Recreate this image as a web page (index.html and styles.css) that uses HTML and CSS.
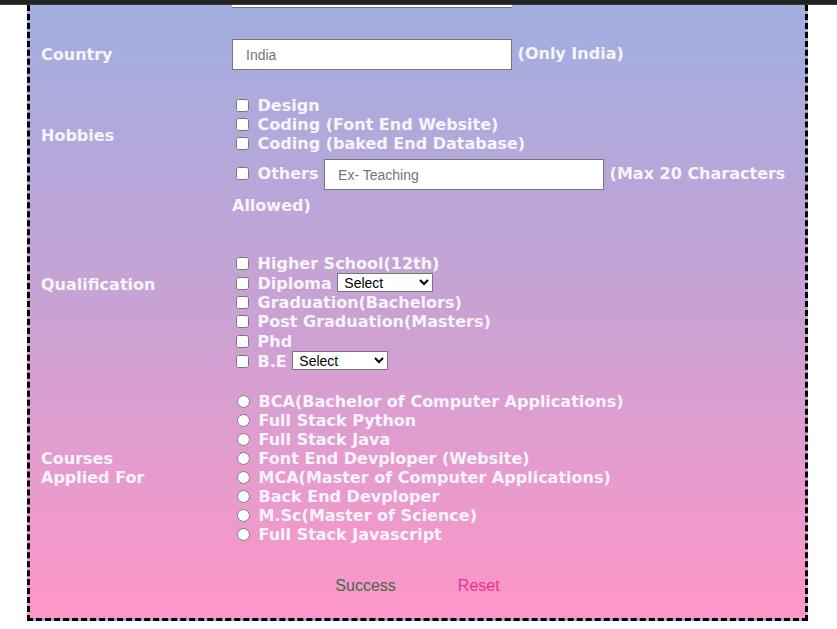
FILE: index.html
```html
<!DOCTYPE html>
<html>
<head>
<meta charset="utf-8">
<link rel="stylesheet" href="styles.css">
</head>
<body>
<div class="topbar"></div>
<form class="form">
  <div class="row">
    <div class="label"></div>
    <div class="field"><div class="stub"></div></div>
  </div>

  <div class="row row-country">
    <div class="label label-country">Country</div>
    <div class="field"><input class="text" type="text" placeholder="India"> (Only India)</div>
  </div>

  <div class="row row-hobbies">
    <div class="label label-hobbies">Hobbies</div>
    <div class="field">
      <div class="line"><input type="checkbox"> Design</div>
      <div class="line"><input type="checkbox"> Coding (Font End Website)</div>
      <div class="line"><input type="checkbox"> Coding (baked End Database)</div>
      <div class="line-others"><input type="checkbox"> Others <input class="text" type="text" placeholder="Ex- Teaching"> (Max 20 Characters<br>Allowed)</div>
    </div>
  </div>

  <div class="row row-qual">
    <div class="label label-qual">Qualification</div>
    <div class="field">
      <div class="line line-q"><input type="checkbox"> Higher School(12th)</div>
      <div class="line line-q"><input type="checkbox"> Diploma <select class="sel"><option>Select</option></select></div>
      <div class="line line-q"><input type="checkbox"> Graduation(Bachelors)</div>
      <div class="line line-q"><input type="checkbox"> Post Graduation(Masters)</div>
      <div class="line line-q"><input type="checkbox"> Phd</div>
      <div class="line line-q"><input type="checkbox"> B.E <select class="sel"><option>Select</option></select></div>
    </div>
  </div>

  <div class="row row-courses">
    <div class="label label-courses">Courses<br>Applied For</div>
    <div class="field">
      <div class="line"><input type="radio" name="c"> BCA(Bachelor of Computer Applications)</div>
      <div class="line"><input type="radio" name="c"> Full Stack Python</div>
      <div class="line"><input type="radio" name="c"> Full Stack Java</div>
      <div class="line"><input type="radio" name="c"> Font End Devploper (Website)</div>
      <div class="line"><input type="radio" name="c"> MCA(Master of Computer Applications)</div>
      <div class="line"><input type="radio" name="c"> Back End Devploper</div>
      <div class="line"><input type="radio" name="c"> M.Sc(Master of Science)</div>
      <div class="line"><input type="radio" name="c"> Full Stack Javascript</div>
    </div>
  </div>

  <div class="buttons">
    <button type="button" class="btn btn-success">Success</button>
    <button type="reset" class="btn btn-reset">Reset</button>
  </div>
</form>
</body>
</html>
```

FILE: styles.css
```css
html, body {
  margin: 0;
  padding: 0;
  background: #ffffff;
}

.topbar {
  height: 4px;
  background: #222223;
  border-bottom: 1px solid #3a3a3a;
}

.form {
  margin-left: 27px;
  width: 781px;
  box-sizing: border-box;
  border: 3px dashed #000;
  border-top: none;
  padding: 0 11px 0 11px;
  background: linear-gradient(to bottom, #a1aee0 0%, #c8a2d4 48%, #ff96c8 100%);
  font-family: "DejaVu Sans", Verdana, sans-serif;
  font-weight: bold;
  font-size: 16px;
  color: #f8f4fc;
}

.row {
  display: grid;
  grid-template-columns: 191px 1fr;
}

.label {
  line-height: 19px;
}

.line {
  height: 19px;
  line-height: 19px;
  white-space: nowrap;
}

.line-q {
  height: 19.4px;
  line-height: 19.4px;
}

input[type="checkbox"] {
  margin: 0 3px 0 4px;
  vertical-align: -1px;
}

input[type="radio"] {
  margin: 0 3px 0 5px;
  vertical-align: -1px;
}

.stub {
  width: 280px;
  height: 2px;
  background: #fff;
  border-bottom: 1px solid #767676;
}

.row-country {
  margin-top: 31px;
  align-items: center;
}

.row-hobbies {
  margin-top: 26px;
}

.label-hobbies {
  margin-top: 30px;
}

.line-others {
  margin-top: 5px;
  line-height: 31px;
}

.row-qual {
  margin-top: 33px;
}

.label-qual {
  margin-top: 21px;
}

.row-courses {
  margin-top: 21.5px;
}

.label-courses {
  margin-top: 57px;
}

.text {
  box-sizing: border-box;
  width: 280px;
  height: 31px;
  border: 1px solid #767676;
  padding: 0 13px;
  font-family: Arial, "Liberation Sans", sans-serif;
  font-size: 14px;
  font-weight: normal;
  vertical-align: middle;
  background: #fff;
}

.text::placeholder {
  color: #757575;
}

.sel {
  box-sizing: border-box;
  width: 96px;
  height: 19px;
  font-family: Arial, "Liberation Sans", sans-serif;
  font-size: 14px;
  font-weight: normal;
  color: #000;
  background: #fff;
  border: 1px solid #767676;
  vertical-align: 1px;
  padding: 0 0 0 2px;
}

.buttons {
  display: flex;
  justify-content: center;
  gap: 62px;
  padding: 32px 0 23.5px;
}

.btn {
  background: none;
  border: none;
  padding: 0;
  font-family: Arial, "Liberation Sans", sans-serif;
  font-size: 16px;
  line-height: 19px;
}

.btn-success {
  color: #3d6a48;
}

.btn-reset {
  color: #e8338a;
}
```
